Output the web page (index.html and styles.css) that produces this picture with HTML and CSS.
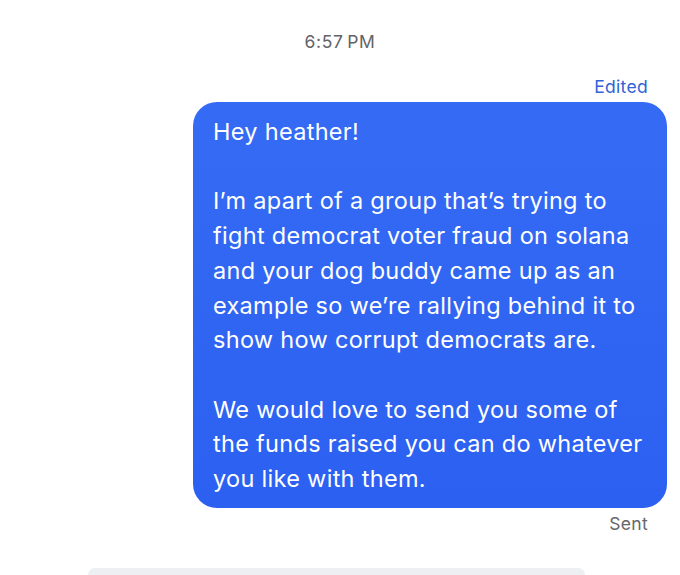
FILE: index.html
```html
<!DOCTYPE html>
<html lang="en">
<head>
    <meta charset="UTF-8">
    <meta name="viewport" content="width=device-width, initial-scale=1.0">
    <title>Messages</title>
    <link rel="stylesheet" href="styles.css">
</head>
<body>
    <div class="chat">
        <div class="timestamp">6:57&thinsp;PM</div>

        <div class="status edited">Edited</div>
        <div class="bubble">
            <p>Hey heather!</p>
            <p>I’m apart of a group that’s trying to fight democrat voter fraud on solana and your dog buddy came up as an example so we’re rallying behind it to show how corrupt democrats are.</p>
            <p>We would love to send you some of the funds raised you can do whatever you like with them.</p>
        </div>
        <div class="status sent">Sent</div>
    </div>

    <div class="composer"></div>
</body>
</html>
```

FILE: styles.css
```css
body {
    margin: 0;
    width: 680px;
    height: 575px;
    overflow: hidden;
    background-color: #ffffff;
    font-family: Inter, "Noto Sans", sans-serif;
    display: flex;
    flex-direction: column;
}

.chat {
    display: flex;
    flex-direction: column;
    align-items: flex-end;
    padding: 30px 13px 0 0;
}

.timestamp {
    align-self: stretch;
    text-align: center;
    color: #636368;
    font-size: 17.5px;
    letter-spacing: 0.6px;
    line-height: 24px;
    padding-left: 13px;
    margin-bottom: 22px;
}

.status {
    font-size: 17.5px;
    letter-spacing: 0.3px;
    line-height: 22px;
    margin-right: 19px;
}

.edited {
    color: #2f63d6;
    margin-bottom: 4px;
}

.sent {
    color: #66666b;
    margin-top: 5px;
}

.bubble {
    width: 474px;
    box-sizing: border-box;
    padding: 13px 14px 11px 20px;
    border-radius: 24px;
    background: linear-gradient(to bottom, #356bf4, #2c60f1);
    color: #ffffff;
    font-size: 23.5px;
    letter-spacing: 0.3px;
    line-height: 34.7px;
}

.bubble p {
    margin: 0 0 34.7px 0;
}

.bubble p:last-child {
    margin-bottom: 0;
}

.composer {
    margin: auto 95px 0 88px;
    height: 7px;
    background-color: #eeeff3;
    border-radius: 22px 22px 0 0;
}
```
